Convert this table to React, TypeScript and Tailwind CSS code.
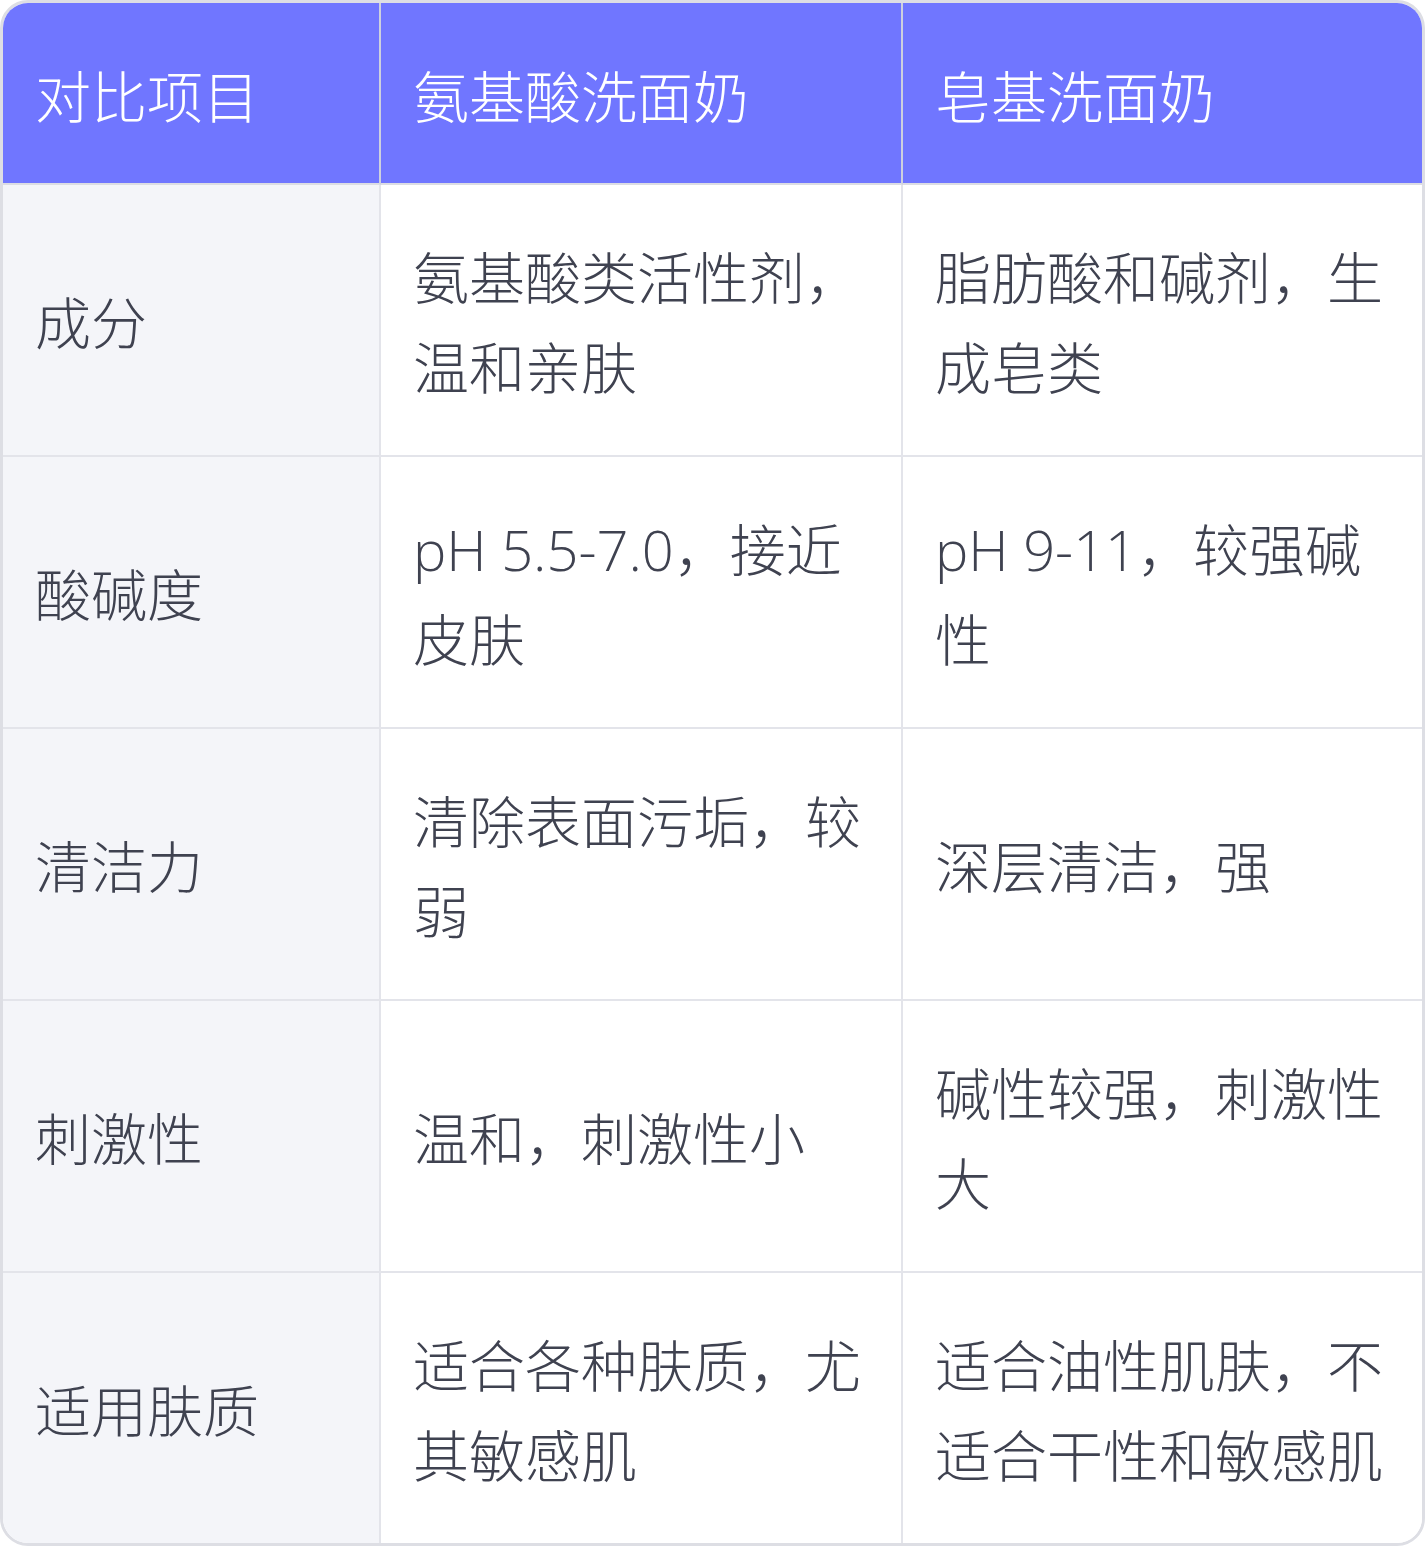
import React from 'react';

const rows = [
  { item: '成分', amino: '氨基酸类活性剂，温和亲肤', soap: '脂肪酸和碱剂，生成皂类' },
  { item: '酸碱度', amino: 'pH 5.5-7.0，接近皮肤', soap: 'pH 9-11，较强碱性' },
  { item: '清洁力', amino: '清除表面污垢，较弱', soap: '深层清洁，强' },
  { item: '刺激性', amino: '温和，刺激性小', soap: '碱性较强，刺激性大' },
  { item: '适用肤质', amino: '适合各种肤质，尤其敏感肌', soap: '适合油性肌肤，不适合干性和敏感肌' },
];

export default function App() {
  return (
    <div
      className="w-[1425px] bg-white"
      style={{ fontFamily: '"Open Sans", "Noto Sans CJK SC", sans-serif' }}
    >
      <div className="border-[3px] border-[#dddee4] rounded-[28px] overflow-hidden">
        <div className="grid grid-cols-[378px_522px_519px] text-[56px] leading-[90px] font-light">
          {/* Header */}
          <div className="h-[182px] flex items-center pl-[32px] pr-[34px] pt-[5px] bg-[#7076ff] text-white border-r-2 border-r-[#cdd0de] border-b-2 border-b-[#dcdde3]">
            对比项目
          </div>
          <div className="h-[182px] flex items-center pl-[32px] pr-[34px] pt-[5px] bg-[#7076ff] text-white border-r-2 border-r-[#cdd0de] border-b-2 border-b-[#dcdde3]">
            氨基酸洗面奶
          </div>
          <div className="h-[182px] flex items-center pl-[32px] pr-[34px] pt-[5px] bg-[#7076ff] text-white border-b-2 border-b-[#dcdde3]">
            皂基洗面奶
          </div>

          {rows.map((row, i) => {
            const last = i === rows.length - 1;
            const bottom = last ? 'h-[270px]' : 'h-[272px] border-b-2 border-b-[#e3e4ea]';
            return (
              <React.Fragment key={row.item}>
                <div className={`${bottom} flex items-center pl-[32px] pr-[34px] pt-[4px] bg-[#f4f5f9] text-[#3f4250] border-r-2 border-r-[#e3e4ea]`}>
                  {row.item}
                </div>
                <div className={`${bottom} flex items-center pl-[32px] pr-[34px] pt-[4px] bg-white text-[#3f4250] border-r-2 border-r-[#e3e4ea]`}>
                  <span>{row.amino}</span>
                </div>
                <div className={`${bottom} flex items-center pl-[32px] pr-[34px] pt-[4px] bg-white text-[#3f4250]`}>
                  <span>{row.soap}</span>
                </div>
              </React.Fragment>
            );
          })}
        </div>
      </div>
    </div>
  );
}
